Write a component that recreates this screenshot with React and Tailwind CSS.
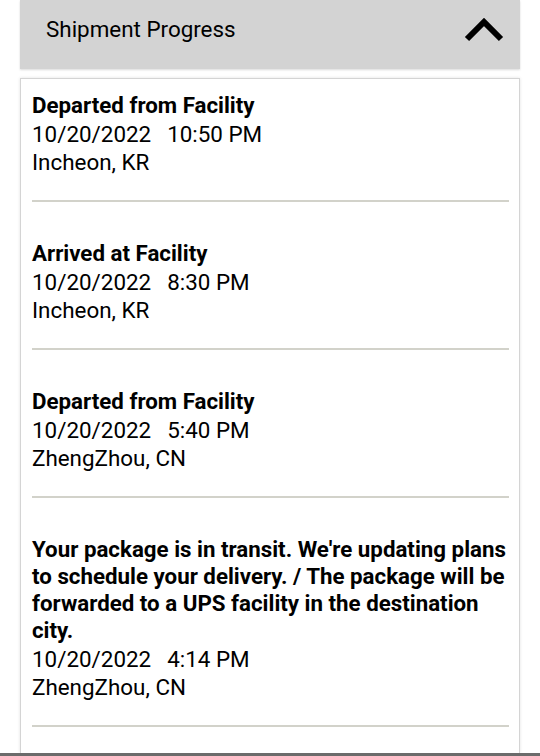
export default function App() {
  const events = [
    {
      title: "Departed from Facility",
      date: "10/20/2022",
      time: "10:50 PM",
      place: "Incheon, KR",
    },
    {
      title: "Arrived at Facility",
      date: "10/20/2022",
      time: "8:30 PM",
      place: "Incheon, KR",
    },
    {
      title: "Departed from Facility",
      date: "10/20/2022",
      time: "5:40 PM",
      place: "ZhengZhou, CN",
    },
    {
      title:
        "Your package is in transit. We're updating plans to schedule your delivery. / The package will be forwarded to a UPS facility in the destination city.",
      date: "10/20/2022",
      time: "4:14 PM",
      place: "ZhengZhou, CN",
    },
  ];

  return (
    <div className="h-[756px] overflow-hidden bg-white font-['Roboto',sans-serif] text-black flex flex-col">
      <div className="flex-1 overflow-hidden px-5 flex flex-col">
        {/* Header */}
        <div className="h-[69px] shrink-0 bg-[#d3d3d3] shadow-[0_1px_2px_rgba(0,0,0,0.15)] flex items-center justify-between pl-[26px] pr-[15px] pb-[10px]">
          <span className="text-[22.4px] leading-none">Shipment Progress</span>
          <svg width="42" height="26" viewBox="0 0 42 26">
            <path
              d="M4 22 L21 5 L38 22"
              fill="none"
              stroke="#000"
              strokeWidth="6"
              strokeLinecap="butt"
              strokeLinejoin="miter"
            />
          </svg>
        </div>

        {/* Events card */}
        <div className="flex-1 mt-[9px] border border-[#d4d4d4] border-b-0 shadow-[0_0_3px_rgba(0,0,0,0.12)] bg-white pl-[11px] pr-[10px] pt-[13px]">
          {events.map((ev, i) => (
            <div key={i} className={i === 0 ? "" : "pt-[38px]"}>
              <div className="text-[22.3px] leading-[27px] font-bold">{ev.title}</div>
              <div className="text-[22.4px] leading-[28px] mt-[1px]">
                {ev.date}
                <span className="ml-[16px]">{ev.time}</span>
              </div>
              <div className="text-[22.4px] leading-[28px]">{ev.place}</div>
              <div className="mt-[24px] h-[2px] bg-[#d2d2ca]" />
            </div>
          ))}
        </div>
      </div>
      <div className="h-[3px] shrink-0 bg-[#6b6b6b]" />
    </div>
  );
}
